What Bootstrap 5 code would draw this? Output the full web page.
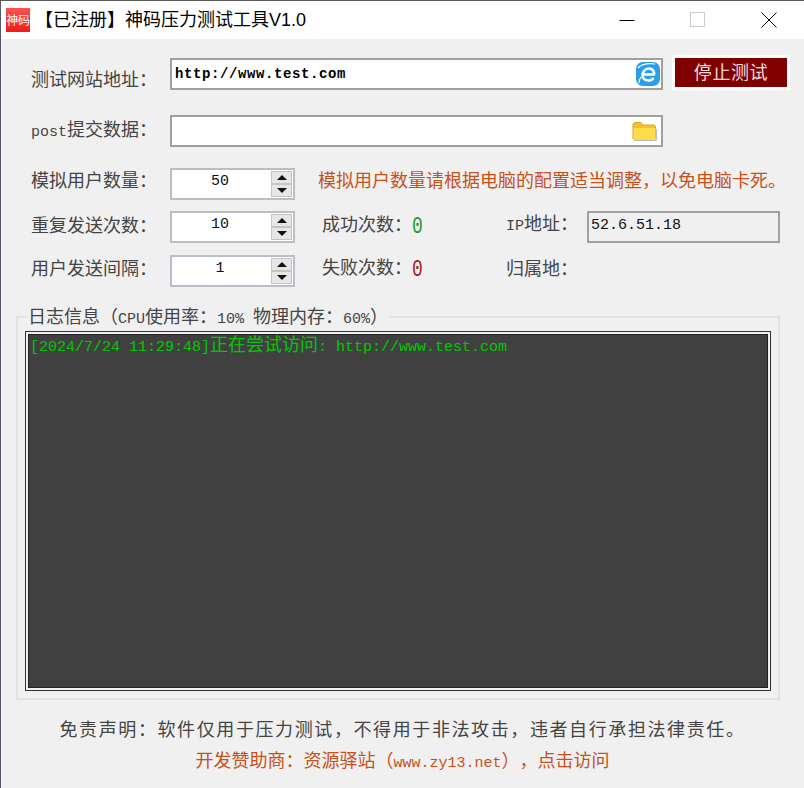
<!DOCTYPE html>
<html lang="zh-CN">
<head>
<meta charset="utf-8">
<title>神码压力测试工具</title>
<link href="https://cdn.jsdelivr.net/npm/bootstrap@5.3.0/dist/css/bootstrap.min.css" rel="stylesheet">
<style>
html,body{height:100%;}
body{background:#f0f0f0;font-family:"Noto Sans CJK SC",sans-serif;font-size:18px;line-height:24px;color:#444;overflow:hidden;text-spacing-trim:space-all;}
.lat{font-family:"Liberation Mono",monospace;font-size:15px;}
.win{height:788px;border-top:1px solid #5a5a5a;border-left:1px solid #50586a;}
.titlebar{height:38px;background:#fff;color:#000;}
.ttext{font-family:"Liberation Sans","Noto Sans CJK SC",sans-serif;margin-left:5px;}
.logo{width:24px;height:24px;margin-left:5px;background:linear-gradient(#ff5050,#f01c1c);color:#fff;font-size:12px;line-height:24px;letter-spacing:-.2px;}
.wctl{width:71px;height:38px;}
.main{padding:16px 0 0 30px;}
.rowa{height:35px;}
.rowb{height:32px;margin-top:25px;}
.rowc{height:32px;margin-top:21px;}
.rowd{height:32px;margin-top:11px;}
.rowe{height:32px;margin-top:12px;}
.lab{width:139px;flex:none;}
.tx2{margin-bottom:2px;}
.tx6{margin-bottom:6px;}
.tx8{margin-bottom:8px;}
.tx10{margin-bottom:10px;}
.field{background:#fff;border:2px solid #a0a0a0;height:32px;color:#000;padding-left:3px;}
.w493{width:493px;flex:none;}
.field .lat{font-size:14px;letter-spacing:.6px;line-height:24px;padding-top:2px;}
.stopbtn{width:118px;height:35px;flex:none;margin-left:9px;background:#800000;color:#f4dede;border:3px solid #fff;border-radius:0;padding:0 0 3px;font-size:18px;line-height:24px;letter-spacing:.6px;}
.stopbtn:hover{background:#800000;color:#f4dede;border-color:#fff;}
.spin{width:125px;height:32px;flex:none;background:#fff;border:2px solid #b8bfc8;color:#111;}
.spval{width:96px;margin-right:3px;text-align:center;}
.spbtns{width:21px;margin:1px 0;}
.spb{height:13px;background:#e6e6e6;border:1px solid #c4c4c4;}
.tri-up{width:0;height:0;border-left:5px solid transparent;border-right:5px solid transparent;border-bottom:5px solid #111;}
.tri-dn{width:0;height:0;border-left:5px solid transparent;border-right:5px solid transparent;border-top:5px solid #111;}
.warn{color:#c8501a;margin-left:23px;white-space:nowrap;}
.stat{width:184px;margin-left:27px;flex:none;}
.zero{display:inline-block;font-size:18px;transform:scaleY(1.35);}
.zg{color:#1e9a1e;}
.zr{color:#a02020;}
.iplab{width:81px;flex:none;}
.ipbox{width:193px;height:32px;flex:none;background:#f0f0f0;border:2px solid #a0a0a0;color:#111;padding-left:2px;line-height:25px;}
.grp{margin:23px 0 0 -15px;width:764px;height:390px;border:2px solid #e2e2e2;padding:0 7px 7px 7px;}
.grp legend{float:none;width:auto;margin:0 0 7px 1px;padding:0 2px;font-size:18px;line-height:10px;white-space:nowrap;height:14px;}
.logbox{height:360px;background:#404040;border:1px solid #333;box-shadow:inset 0 0 0 2px #f0f0f0,inset 0 0 0 3px #222;color:#00c800;padding:1px 4px;line-height:20px;white-space:nowrap;}
.foot{margin-left:-30px;width:803px;text-align:center;}
.f1{margin-top:16px;letter-spacing:1.6px;}
.f2{margin-top:7px;color:#c8501a;}
</style>
</head>
<body>
<div class="win">
  <div class="titlebar d-flex align-items-center">
    <div class="logo text-center flex-none overflow-hidden">神码</div>
    <div class="ttext flex-grow-1">【已注册】神码压力测试工具V1.0</div>
    <div class="wctl d-flex align-items-center justify-content-center"><svg width="16" height="16" viewBox="0 0 16 16"><path d="M0.5 8.5H15.5" stroke="#000" fill="none"/></svg></div>
    <div class="wctl d-flex align-items-center justify-content-center"><svg width="16" height="16" viewBox="0 0 16 16"><rect x=".5" y=".5" width="14" height="14" stroke="#ccc" fill="none"/></svg></div>
    <div class="wctl d-flex align-items-center justify-content-center"><svg width="16" height="16" viewBox="0 0 16 16"><path d="M.5 .5L15.5 15.5M15.5 .5L.5 15.5" stroke="#000" fill="none"/></svg></div>
  </div>
  <div class="main">
    <div class="rowa d-flex align-items-end">
      <div class="lab">测试网站地址：</div>
      <div class="field w493 d-flex justify-content-between align-items-start">
        <span class="lat fw-bold">http://www.test.com</span>
        <svg width="26" height="26" viewBox="0 0 26 26"><rect x="1" y="2" width="24" height="24" rx="7" fill="#2a9ee8"/><path d="M8 14.500H19C19.500 11 17 8.500 14 8.500S8 11 7.500 15C7.500 18.500 10 20.500 13.500 20.500C15.500 20.500 17.500 19.500 18.500 18" fill="none" stroke="#fff" stroke-width="2.6"/><path d="M3 8C6 4.500 12 3 20 4M4 23C4 21 4.500 19 6 17" fill="none" stroke="#fff" stroke-width="1.2"/></svg>
      </div>
      <button class="btn stopbtn" type="button">停止测试</button>
    </div>
    <div class="rowb d-flex align-items-center">
      <div class="lab tx2"><span class="lat">post</span>提交数据：</div>
      <div class="field w493 d-flex justify-content-end align-items-center pe-1">
        <svg width="25" height="20" viewBox="0 0 25 20"><path d="M1 3.500C1 2.500 2 1.500 3 1.500H9L11 4H22C23 4 23.500 5 23.500 6V18H1Z" fill="#f2c030" stroke="#d8a828"/><path d="M1.500 7H23.500V18.500H1.500Z" fill="#ffdc4a"/><path d="M2 19.500H24.500V8" fill="none" stroke="#bbb"/></svg>
      </div>
    </div>
    <div class="rowc d-flex align-items-center">
      <div class="lab tx10">模拟用户数量：</div>
      <div class="spin d-flex">
        <div class="spval lat">50</div>
        <div class="spbtns d-flex flex-column">
          <div class="spb d-flex align-items-center justify-content-center"><div class="tri-up"></div></div>
          <div class="spb d-flex align-items-center justify-content-center"><div class="tri-dn"></div></div>
        </div>
      </div>
      <div class="warn tx10">模拟用户数量请根据电脑的配置适当调整，以免电脑卡死。</div>
    </div>
    <div class="rowd d-flex align-items-center">
      <div class="lab tx6">重复发送次数：</div>
      <div class="spin d-flex">
        <div class="spval lat">10</div>
        <div class="spbtns d-flex flex-column">
          <div class="spb d-flex align-items-center justify-content-center"><div class="tri-up"></div></div>
          <div class="spb d-flex align-items-center justify-content-center"><div class="tri-dn"></div></div>
        </div>
      </div>
      <div class="stat tx6">成功次数：<span class="zero zg lat">0</span></div>
      <div class="iplab tx6"><span class="lat">IP</span>地址：</div>
      <div class="ipbox lat">52.6.51.18</div>
    </div>
    <div class="rowe d-flex align-items-center">
      <div class="lab tx8">用户发送间隔：</div>
      <div class="spin d-flex">
        <div class="spval lat">1</div>
        <div class="spbtns d-flex flex-column">
          <div class="spb d-flex align-items-center justify-content-center"><div class="tri-up"></div></div>
          <div class="spb d-flex align-items-center justify-content-center"><div class="tri-dn"></div></div>
        </div>
      </div>
      <div class="stat tx8">失败次数：<span class="zero zr lat">0</span></div>
      <div class="iplab tx8">归属地：</div>
    </div>
    <fieldset class="grp">
      <legend>日志信息（<span class="lat">CPU</span>使用率：<span class="lat">10% </span>物理内存：<span class="lat">60%</span>）</legend>
      <div class="logbox"><span class="lat">[2024/7/24 11:29:48]</span>正在尝试访问<span class="lat">: http://www.test.com</span></div>
    </fieldset>
    <div class="foot f1">免责声明：软件仅用于压力测试，不得用于非法攻击，违者自行承担法律责任。</div>
    <div class="foot f2">开发赞助商：资源驿站（<span class="lat">www.zy13.net</span>），点击访问</div>
  </div>
</div>
<script src="https://cdn.jsdelivr.net/npm/bootstrap@5.3.0/dist/js/bootstrap.bundle.min.js"></script>
</body>
</html>
